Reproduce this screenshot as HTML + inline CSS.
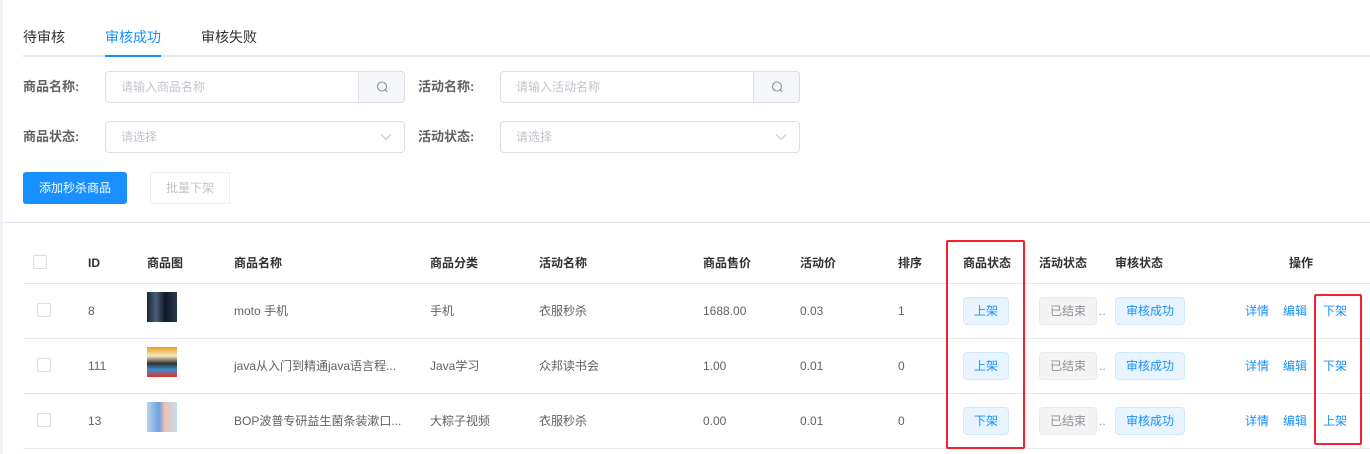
<!DOCTYPE html>
<html><head><meta charset="utf-8"><style>
*{margin:0;padding:0;box-sizing:border-box}
body{width:1370px;height:454px;background:#fff;font-family:"Liberation Sans","Noto Sans CJK SC",sans-serif;font-size:12px;color:#606266;position:relative;overflow:hidden;line-height:17px}
.a{position:absolute;white-space:nowrap;line-height:17px}
.line{position:absolute;height:1px;background:#e4e7ed}
.lbl{font-weight:bold;color:#606266;font-size:13px}
.inp{position:absolute;border:1px solid #dcdfe6;border-radius:4px;height:32px;color:#c0c4cc;font-size:12px;line-height:30px;padding-left:15px}
.sbtn{position:absolute;right:-1px;top:-1px;width:47px;height:32px;background:#f5f7fa;border:1px solid #dcdfe6;border-radius:0 4px 4px 0}
.th{position:absolute;top:255px;font-weight:bold;color:#303133;font-size:12px;line-height:17px}
.cb{position:absolute;width:14px;height:14px;border:1px solid #dcdfe6;border-radius:2px;background:#fff}
.tag{position:absolute;height:28px;line-height:26px;border-radius:4px;text-align:center;font-size:12px}
.blue{background:#e8f4ff;border:1px solid #d1e9ff;color:#1890ff}
.gray{background:#f4f4f5;border:1px solid #e9e9eb;color:#909399}
.lnk{position:absolute;color:#1890ff;font-size:12px;line-height:17px}
.red{position:absolute;border:2px solid #f5222d;border-radius:2px}
</style></head><body>
<div style="position:absolute;left:0;top:0;width:3px;height:454px;background:#f0f2f5"></div>
<div class="a" style="left:23px;top:28px;font-size:14px;color:#303133;line-height:19px">待审核</div>
<div class="a" style="left:105px;top:28px;font-size:14px;color:#1890ff;line-height:19px">审核成功</div>
<div class="a" style="left:201px;top:28px;font-size:14px;color:#303133;line-height:19px">审核失败</div>
<div class="line" style="left:23px;top:55px;width:1347px;height:2px"></div>
<div style="position:absolute;left:105px;top:55px;width:56px;height:2px;background:#1890ff"></div>

<div class="a lbl" style="left:23px;top:78px">商品名称:</div>
<div class="inp" style="left:105px;top:71px;width:300px">请输入商品名称<div class="sbtn"><svg width="47" height="30" viewBox="0 0 47 30"><circle cx="23" cy="14.5" r="4.5" fill="none" stroke="#909399" stroke-width="1.1"/><path d="M26.3 17.8l2 2" stroke="#909399" stroke-width="1.1"/></svg></div></div>
<div class="a lbl" style="left:418px;top:78px">活动名称:</div>
<div class="inp" style="left:500px;top:71px;width:300px">请输入活动名称<div class="sbtn"><svg width="47" height="30" viewBox="0 0 47 30"><circle cx="23" cy="14.5" r="4.5" fill="none" stroke="#909399" stroke-width="1.1"/><path d="M26.3 17.8l2 2" stroke="#909399" stroke-width="1.1"/></svg></div></div>

<div class="a lbl" style="left:23px;top:128px">商品状态:</div>
<div class="inp" style="left:105px;top:121px;width:300px">请选择<svg style="position:absolute;right:12px;top:11px" width="12" height="8"><path d="M1 1.5l5 5 5-5" fill="none" stroke="#c0c4cc" stroke-width="1.1"/></svg></div>
<div class="a lbl" style="left:418px;top:128px">活动状态:</div>
<div class="inp" style="left:500px;top:121px;width:300px">请选择<svg style="position:absolute;right:12px;top:11px" width="12" height="8"><path d="M1 1.5l5 5 5-5" fill="none" stroke="#c0c4cc" stroke-width="1.1"/></svg></div>

<div class="a" style="left:23px;top:172px;width:104px;height:32px;background:#1890ff;border-radius:3px;color:#fff;line-height:32px;text-align:center">添加秒杀商品</div>
<div class="a" style="left:150px;top:172px;width:80px;height:32px;border:1px solid #ebeef5;border-radius:3px;color:#c0c4cc;line-height:30px;text-align:center">批量下架</div>
<div class="line" style="left:3px;top:222px;width:1367px"></div>

<div class="cb" style="left:33px;top:255px"></div>
<div class="th" style="left:88px">ID</div>
<div class="th" style="left:147px">商品图</div>
<div class="th" style="left:234px">商品名称</div>
<div class="th" style="left:430px">商品分类</div>
<div class="th" style="left:539px">活动名称</div>
<div class="th" style="left:703px">商品售价</div>
<div class="th" style="left:800px">活动价</div>
<div class="th" style="left:898px">排序</div>
<div class="th" style="left:963px">商品状态</div>
<div class="th" style="left:1039px">活动状态</div>
<div class="th" style="left:1115px">审核状态</div>
<div class="th" style="left:1289px">操作</div>
<div class="line" style="left:23px;top:283px;width:1347px"></div>
<div class="line" style="left:23px;top:338px;width:1347px"></div>
<div class="line" style="left:23px;top:393px;width:1347px"></div>
<div class="line" style="left:23px;top:448px;width:1347px"></div>

<!-- row1 -->
<div class="cb" style="left:37px;top:303px"></div>
<div class="a" style="left:88px;top:303px">8</div>
<div class="a" style="left:147px;top:292px;width:30px;height:30px;background:linear-gradient(90deg,#1a2535,#4a6078 30%,#0f1a28 60%,#2b3a50)"></div>
<div class="a" style="left:234px;top:303px">moto 手机</div>
<div class="a" style="left:430px;top:303px">手机</div>
<div class="a" style="left:539px;top:303px">衣服秒杀</div>
<div class="a" style="left:703px;top:303px">1688.00</div>
<div class="a" style="left:800px;top:303px">0.03</div>
<div class="a" style="left:898px;top:303px">1</div>
<div class="tag blue" style="left:963px;top:297px;width:46px">上架</div>
<div class="tag gray" style="left:1039px;top:297px;width:58px">已结束</div>
<div class="a" style="left:1099px;top:303px;color:#909399">..</div>
<div class="tag blue" style="left:1115px;top:297px;width:70px">审核成功</div>
<div class="lnk" style="left:1245px;top:303px">详情</div><div class="lnk" style="left:1283px;top:303px">编辑</div><div class="lnk" style="left:1323px;top:303px">下架</div>

<!-- row2 -->
<div class="cb" style="left:37px;top:358px"></div>
<div class="a" style="left:88px;top:358px">111</div>
<div class="a" style="left:147px;top:347px;width:30px;height:30px;background:linear-gradient(180deg,#e8a020 0%,#f5e8c0 30%,#303030 55%,#3a8fd0 75%,#e83020 100%)"></div>
<div class="a" style="left:234px;top:358px">java从入门到精通java语言程...</div>
<div class="a" style="left:430px;top:358px">Java学习</div>
<div class="a" style="left:539px;top:358px">众邦读书会</div>
<div class="a" style="left:703px;top:358px">1.00</div>
<div class="a" style="left:800px;top:358px">0.01</div>
<div class="a" style="left:898px;top:358px">0</div>
<div class="tag blue" style="left:963px;top:352px;width:46px">上架</div>
<div class="tag gray" style="left:1039px;top:352px;width:58px">已结束</div>
<div class="a" style="left:1099px;top:358px;color:#909399">..</div>
<div class="tag blue" style="left:1115px;top:352px;width:70px">审核成功</div>
<div class="lnk" style="left:1245px;top:358px">详情</div><div class="lnk" style="left:1283px;top:358px">编辑</div><div class="lnk" style="left:1323px;top:358px">下架</div>

<!-- row3 -->
<div class="cb" style="left:37px;top:413px"></div>
<div class="a" style="left:88px;top:413px">13</div>
<div class="a" style="left:147px;top:402px;width:30px;height:30px;background:linear-gradient(90deg,#b8d4f0,#6ea0e0 40%,#f0c0b0 60%,#c8dcf0)"></div>
<div class="a" style="left:234px;top:413px">BOP波普专研益生菌条装漱口...</div>
<div class="a" style="left:430px;top:413px">大粽子视频</div>
<div class="a" style="left:539px;top:413px">衣服秒杀</div>
<div class="a" style="left:703px;top:413px">0.00</div>
<div class="a" style="left:800px;top:413px">0.01</div>
<div class="a" style="left:898px;top:413px">0</div>
<div class="tag blue" style="left:963px;top:407px;width:46px">下架</div>
<div class="tag gray" style="left:1039px;top:407px;width:58px">已结束</div>
<div class="a" style="left:1099px;top:413px;color:#909399">..</div>
<div class="tag blue" style="left:1115px;top:407px;width:70px">审核成功</div>
<div class="lnk" style="left:1245px;top:413px">详情</div><div class="lnk" style="left:1283px;top:413px">编辑</div><div class="lnk" style="left:1323px;top:413px">上架</div>

<div class="red" style="left:946px;top:240px;width:79px;height:209px"></div>
<div class="red" style="left:1314px;top:294px;width:48px;height:151px"></div>
</body></html>
